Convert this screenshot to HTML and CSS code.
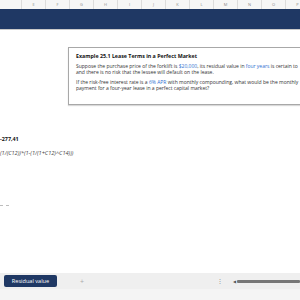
FILE: index.html
```html
<!DOCTYPE html>
<html lang="en">
<head>
    <meta charset="UTF-8">
    <meta name="viewport" content="width=device-width, initial-scale=1.0">
    <title>Lease Terms - Residual value</title>
    <link rel="stylesheet" href="styles.css">
</head>
<body>

<div class="col-header">
    <div class="col-first"></div>
    <div class="col">E</div>
    <div class="col">F</div>
    <div class="col">G</div>
    <div class="col">H</div>
    <div class="col">I</div>
    <div class="col">J</div>
    <div class="col">K</div>
    <div class="col">L</div>
    <div class="col">M</div>
    <div class="col">N</div>
    <div class="col">O</div>
    <div class="col">P</div>
</div>

<div class="banner"></div>

<div class="sheet">
    <div class="example-box">
        <div class="example-title">Example 25.1 Lease Terms in a Perfect Market</div>
        <p class="example-text">Suppose the purchase price of the forklift is <span class="hl">$20,000</span>, its residual value in <span class="hl">four years</span> is certain to<br>and there is no risk that the lessee will default on the lease.</p>
        <p class="example-text">If the risk-free interest rate is a <span class="hl">6% APR</span> with monthly compounding, what would be the monthly<br>payment for a four-year lease in a perfect capital market?</p>
    </div>

    <div class="result">
        <div class="result-value">-277,41</div>
        <div class="formula">(1/(C12))*(1-(1/(1+C12)^C14)))</div>
        <div class="dash-mark"></div>
    </div>
</div>

<div class="tab-bar">
    <div class="sheet-tab">Residual value</div>
    <div class="add-tab">+</div>
    <div class="tab-spacer"></div>
    <div class="tab-dots">&#8942;</div>
    <div class="scroll-arrow">&#9664;</div>
    <div class="scroll-track"></div>
</div>
<div class="status-strip"></div>

</body>
</html>
```

FILE: styles.css
```css
:root {
    --navy: #1f3864;
    --hl-blue: #2f6fd0;
    --grid-line: #dcdcdc;
}

body {
    margin: 0;
    width: 300px;
    height: 300px;
    overflow: hidden;
    display: flex;
    flex-direction: column;
    background: #ffffff;
    font-family: "Open Sans", "Liberation Sans", sans-serif;
    color: #222;
}

.col-header {
    display: flex;
    height: 9px;
    background: #f6f6f6;
    flex-shrink: 0;
}

.col-first {
    width: 21px;
    flex-shrink: 0;
}

.col {
    width: 24px;
    flex-shrink: 0;
    border-left: 1px solid var(--grid-line);
    box-sizing: border-box;
    text-align: center;
    font-size: 4px;
    line-height: 9px;
    color: #8a8a8a;
}

.banner {
    height: 20px;
    background: var(--navy);
    border-bottom: 1px solid #c9c9c9;
    flex-shrink: 0;
}

.sheet {
    flex: 1;
    display: flex;
    flex-direction: column;
}

.example-box {
    margin: 17px 0 0 68px;
    width: 260px;
    height: 58px;
    box-sizing: border-box;
    border: 1px solid #a8a8a8;
    box-shadow: 0 1px 1px rgba(0, 0, 0, 0.15);
    padding: 5px 0 0 7px;
    white-space: nowrap;
}

.example-title {
    font-size: 5.3px;
    font-weight: bold;
    line-height: 6px;
    color: #111;
}

.example-text {
    margin: 4px 0 0 0;
    font-size: 5px;
    line-height: 6.3px;
    color: #333;
}

.example-text + .example-text {
    margin-top: 3px;
}

.hl {
    color: var(--hl-blue);
}

.result {
    margin-top: 31px;
    display: flex;
    flex-direction: column;
}

.result-value {
    font-size: 5.4px;
    font-weight: bold;
    line-height: 6px;
    color: #111;
}

.formula {
    margin-top: 8px;
    font-size: 5.6px;
    font-style: italic;
    line-height: 6px;
    color: #444;
}

.dash-mark {
    margin-top: 49px;
    width: 9px;
    height: 0;
    border-top: 1px dashed #bdbdbd;
}

.tab-bar {
    height: 16px;
    background: #efefef;
    display: flex;
    align-items: center;
    flex-shrink: 0;
}

.sheet-tab {
    margin-left: 4px;
    width: 53px;
    height: 12px;
    box-sizing: border-box;
    background: var(--navy);
    color: #ffffff;
    border-radius: 2px;
    font-size: 5.6px;
    line-height: 12px;
    text-align: center;
}

.add-tab {
    margin-left: 23px;
    font-size: 7px;
    color: #aaaaaa;
}

.tab-spacer {
    flex: 1;
}

.tab-dots {
    font-size: 6px;
    color: #888;
    margin-right: 10px;
}

.scroll-arrow {
    font-size: 4px;
    color: #555;
    margin-right: 1px;
}

.scroll-track {
    width: 63px;
    height: 3px;
    background: #777;
    border-radius: 1px;
}

.status-strip {
    height: 11px;
    background: #f4f4f4;
    flex-shrink: 0;
}
```
